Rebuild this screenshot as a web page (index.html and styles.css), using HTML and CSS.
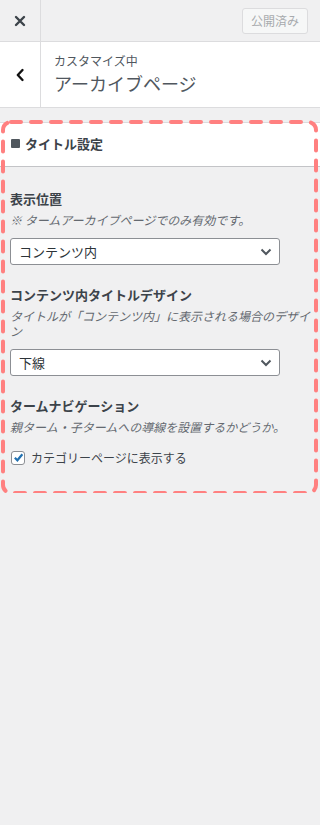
FILE: index.html
```html
<!DOCTYPE html>
<html lang="ja">
<head>
    <meta charset="UTF-8">
    <meta name="viewport" content="width=device-width, initial-scale=1.0">
    <title>カスタマイズ</title>
    <link rel="stylesheet" href="styles.css">
</head>
<body>
    <!-- 上部バー -->
    <div class="topbar">
        <div class="close-btn">
            <svg width="12" height="12" viewBox="0 0 12 12"><path d="M2 2 L10 10 M10 2 L2 10" stroke="#3c434a" stroke-width="2.4" stroke-linecap="round"/></svg>
        </div>
        <div class="spacer"></div>
        <button class="publish-btn" disabled>公開済み</button>
    </div>

    <!-- パネル見出し -->
    <div class="panel-header">
        <div class="back-btn">
            <svg width="10" height="14" viewBox="0 0 10 14"><path d="M7.5 2 L2.8 7 L7.5 12" fill="none" stroke="#111" stroke-width="2.4" stroke-linecap="round" stroke-linejoin="round"/></svg>
        </div>
        <div class="panel-title">
            <div class="panel-sub">カスタマイズ中</div>
            <div class="panel-name">アーカイブページ</div>
        </div>
    </div>

    <!-- タイトル設定セクション -->
    <div class="section">
        <div class="section-title"><span class="square"></span>タイトル設定</div>
        <div class="section-body">
            <div class="control">
                <div class="control-label">表示位置</div>
                <div class="control-desc">※ タームアーカイブページでのみ有効です。</div>
                <div class="select">
                    <span>コンテンツ内</span>
                    <svg width="12" height="8" viewBox="0 0 12 8"><path d="M1.5 1.5 L6 6 L10.5 1.5" fill="none" stroke="#50575e" stroke-width="2"/></svg>
                </div>
            </div>
            <div class="control">
                <div class="control-label">コンテンツ内タイトルデザイン</div>
                <div class="control-desc">タイトルが「コンテンツ内」に表示される場合のデザイン</div>
                <div class="select">
                    <span>下線</span>
                    <svg width="12" height="8" viewBox="0 0 12 8"><path d="M1.5 1.5 L6 6 L10.5 1.5" fill="none" stroke="#50575e" stroke-width="2"/></svg>
                </div>
            </div>
            <div class="control last">
                <div class="control-label">タームナビゲーション</div>
                <div class="control-desc">親ターム・子タームへの導線を設置するかどうか。</div>
                <label class="check-row">
                    <span class="checkbox">
                        <svg width="11" height="11" viewBox="0 0 12 12"><path d="M2 6.2 L4.8 9 L10.2 2.5" fill="none" stroke="#2271b1" stroke-width="2.4"/></svg>
                    </span>
                    カテゴリーページに表示する
                </label>
            </div>
        </div>
        <!-- 点線の枠 -->
        <svg class="dash-frame"><rect class="dash-rect" rx="8" ry="8"/></svg>
    </div>
</body>
</html>
```

FILE: styles.css
```css
body {
    margin: 0;
    background-color: #f0f0f1;
    font-family: 'Noto Sans CJK JP', 'Noto Sans', sans-serif;
    color: #3c434a;
}
.topbar {
    display: flex;
    align-items: center;
    height: 41px;
    border-bottom: 1px solid #dcdcde;
}
.close-btn {
    width: 41px;
    height: 41px;
    border-right: 1px solid #dcdcde;
    display: flex;
    align-items: center;
    justify-content: center;
    box-sizing: border-box;
}
.spacer {
    flex: 1;
}
.publish-btn {
    margin-right: 12px;
    width: 66px;
    height: 26px;
    padding: 0;
    font-family: inherit;
    font-size: 12px;
    color: #a7aaad;
    background-color: #f6f7f7;
    border: 1px solid #dcdcde;
    border-radius: 3px;
}
.panel-header {
    display: flex;
    height: 65px;
    background-color: #fff;
    border-bottom: 1px solid #dcdcde;
}
.back-btn {
    width: 41px;
    border-right: 1px solid #dcdcde;
    display: flex;
    align-items: center;
    justify-content: center;
    box-sizing: border-box;
}
.panel-title {
    padding: 10px 0 0 13px;
}
.panel-sub {
    font-size: 12px;
    line-height: 18px;
    color: #50575e;
}
.panel-name {
    font-size: 18px;
    line-height: 26px;
    color: #50575e;
}
/* 点線で囲まれたセクション */
.section {
    position: relative;
    margin-top: 14px;
    padding-bottom: 27px;
}
.dash-frame {
    position: absolute;
    top: -2px;
    left: 1px;
    width: calc(100% - 3px);
    height: calc(100% + 4px);
    pointer-events: none;
}
.dash-rect {
    x: 2px;
    y: 2px;
    width: calc(100% - 4px);
    height: calc(100% - 4px);
    fill: none;
    stroke: #ff8080;
    stroke-width: 4;
    stroke-dasharray: 10 10;
    stroke-linecap: round;
}
.section-title {
    display: flex;
    align-items: center;
    box-sizing: border-box;
    height: 45px;
    padding: 0 0 3px 11px;
    background-color: #fff;
    border-top: 1px solid #dcdcde;
    border-bottom: 1px solid #c3c4c7;
    font-size: 13px;
    font-weight: bold;
    color: #3c434a;
}
.square {
    width: 9px;
    height: 9px;
    background-color: #50575e;
    border-radius: 1px;
    margin-right: 5px;
}
.section-body {
    padding: 22px 10px 0;
}
.control {
    margin-bottom: 20px;
}
.control.last {
    margin-bottom: 0;
}
.control-label {
    font-size: 13px;
    font-weight: bold;
    line-height: 20px;
    color: #3c434a;
}
.control-desc {
    margin-top: 3px;
    font-size: 12px;
    line-height: 15px;
    font-style: italic;
    color: #646970;
}
.select {
    display: flex;
    align-items: center;
    justify-content: space-between;
    box-sizing: border-box;
    width: 270px;
    height: 27px;
    margin-top: 11px;
    padding: 0 7px 0 8px;
    background-color: #fff;
    border: 1px solid #8c8f94;
    border-radius: 3px;
    font-size: 13px;
    color: #2c3338;
}
.check-row {
    display: flex;
    align-items: center;
    margin-top: 15px;
    font-size: 12px;
    color: #3c434a;
}
.checkbox {
    display: flex;
    align-items: center;
    justify-content: center;
    width: 12px;
    height: 12px;
    margin: 0 6px 0 1px;
    background-color: #fff;
    border: 1px solid #8c8f94;
    border-radius: 3px;
}
```
